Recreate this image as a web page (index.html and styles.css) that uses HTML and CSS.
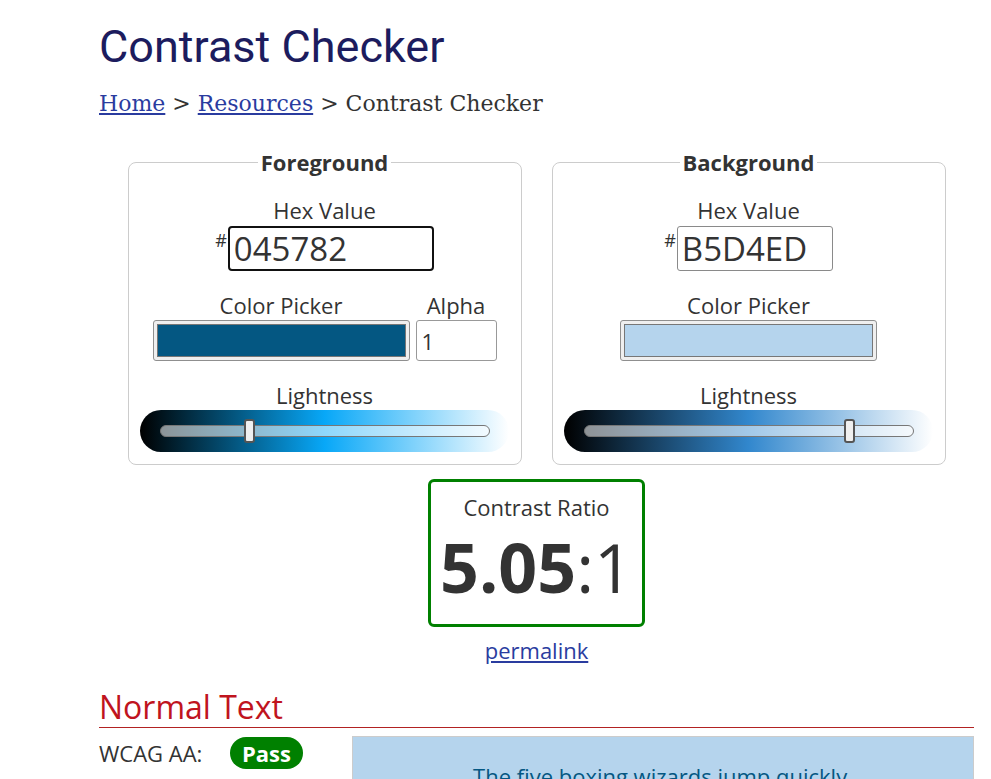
FILE: index.html
```html
<!DOCTYPE html>
<html lang="en">
<head>
<meta charset="utf-8">
<title>Contrast Checker</title>
<link rel="stylesheet" href="styles.css">
</head>
<body>
<main class="page">
  <h1 class="title">Contrast Checker</h1>
  <nav class="crumbs"><a href="#">Home</a> &gt; <a href="#">Resources</a> &gt; Contrast Checker</nav>

  <section class="tool">
    <div class="panels">
      <fieldset class="panel">
        <legend class="panel-title">Foreground</legend>
        <div class="field">
          <label class="label" for="fg-hex">Hex Value</label>
          <div class="hex-row"><span class="hash">#</span><input id="fg-hex" class="hex hex-wide" type="text" value="045782"></div>
        </div>
        <div class="picker-row">
          <div class="col">
            <label class="label" for="fg-color">Color Picker</label>
            <input id="fg-color" class="swatch" type="color" value="#045782">
          </div>
          <div class="col">
            <label class="label" for="fg-alpha">Alpha</label>
            <input id="fg-alpha" class="alpha" type="text" value="1">
          </div>
        </div>
        <div class="field field-light">
          <label class="label" for="fg-light">Lightness</label>
          <div class="light-bar light-fg">
            <input id="fg-light" class="range" type="range" min="0" max="100" step="any" value="26.3">
          </div>
        </div>
      </fieldset>

      <fieldset class="panel">
        <legend class="panel-title">Background</legend>
        <div class="field">
          <label class="label" for="bg-hex">Hex Value</label>
          <div class="hex-row"><span class="hash">#</span><input id="bg-hex" class="hex" type="text" value="B5D4ED"></div>
        </div>
        <div class="picker-row">
          <div class="col">
            <label class="label" for="bg-color">Color Picker</label>
            <input id="bg-color" class="swatch" type="color" value="#b5d4ed">
          </div>
        </div>
        <div class="field field-light">
          <label class="label" for="bg-light">Lightness</label>
          <div class="light-bar light-bg">
            <input id="bg-light" class="range" type="range" min="0" max="100" step="any" value="82">
          </div>
        </div>
      </fieldset>
    </div>

    <div class="ratio-wrap">
      <div class="ratio">
        <div class="ratio-label">Contrast Ratio</div>
        <div class="ratio-value"><b>5.05</b>:1</div>
      </div>
      <a class="permalink" href="#">permalink</a>
    </div>
  </section>

  <section class="results">
    <h2 class="results-title">Normal Text</h2>
    <div class="result-row">
      <div class="result-meta">
        <span class="result-label">WCAG AA:</span>
        <span class="badge">Pass</span>
      </div>
      <div class="sample">The five boxing wizards jump quickly.</div>
    </div>
  </section>
</main>
</body>
</html>
```

FILE: styles.css
```css
html, body {
  margin: 0;
  padding: 0;
  background: #fff;
}

body {
  font-family: "Open Sans", "Noto Sans", sans-serif;
  color: #333;
  overflow: hidden;
}

.page {
  width: 875px;
  padding-left: 99px;
}

.title {
  font-family: Roboto, "Open Sans", sans-serif;
  font-weight: 400;
  font-size: 45px;
  line-height: 52px;
  color: #1c1c5e;
  margin: 21px 0 0;
}

.crumbs {
  font-family: "DejaVu Serif", "Liberation Serif", serif;
  font-size: 22px;
  line-height: 30px;
  margin-top: 16px;
  color: #333;
}

.crumbs a {
  color: #2a3c9f;
}

.panels {
  display: flex;
  justify-content: center;
  gap: 30px;
  margin-top: 28px;
}

.panel {
  box-sizing: border-box;
  width: 394px;
  margin: 0;
  min-width: 0;
  padding: 18px 0 12px;
  border: 1px solid #ccc;
  border-radius: 8px;
}

.panel-title {
  margin: 0 auto;
  padding: 0 3px;
  font-weight: 700;
  font-size: 22px;
  line-height: 30px;
  color: #333;
}

.field {
  display: flex;
  flex-direction: column;
  align-items: center;
}

.label {
  display: block;
  font-size: 22px;
  line-height: 30px;
  text-align: center;
  color: #333;
}

.hex-row {
  display: flex;
  align-items: flex-start;
  margin-top: 1px;
}

.hash {
  font-size: 18px;
  line-height: 18px;
  margin-top: 5px;
  margin-right: 1px;
}

.hex {
  box-sizing: border-box;
  width: 156px;
  height: 45px;
  margin: 0;
  padding: 0 4px;
  font-family: "Open Sans", sans-serif;
  font-size: 33px;
  color: #333;
  border: 1px solid #8a8a8a;
  border-radius: 3px;
  background: #fff;
  outline: none;
}

.hex-wide {
  width: 206px;
  border: 2px solid #111;
  border-radius: 4px;
}

.picker-row {
  display: flex;
  justify-content: center;
  gap: 6px;
  margin-top: 19px;
}

.col {
  display: flex;
  flex-direction: column;
  align-items: center;
}

.swatch {
  box-sizing: border-box;
  width: 257px;
  height: 41px;
  margin: 0;
  padding: 3px;
  border: 1px solid #8f8f8f;
  border-radius: 3px;
  background: #efefef;
  cursor: pointer;
}

.swatch::-webkit-color-swatch-wrapper {
  padding: 0;
}

.swatch::-webkit-color-swatch {
  border: 1px solid #777;
  border-radius: 0;
}

.alpha {
  box-sizing: border-box;
  width: 81px;
  height: 41px;
  margin: 0;
  padding: 0 5px;
  font-family: "Open Sans", sans-serif;
  font-size: 22px;
  color: #333;
  border: 1px solid #999;
  border-radius: 3px;
  background: #fff;
}

.field-light {
  margin-top: 19px;
}

.light-bar {
  box-sizing: border-box;
  width: 369px;
  height: 42px;
  border-radius: 21px;
  display: flex;
  align-items: center;
  justify-content: center;
}

.light-fg {
  background: linear-gradient(to right, hsl(200, 94%, 0%), hsl(200, 94%, 50%), hsl(200, 94%, 100%));
}

.light-bg {
  background: linear-gradient(to right, hsl(207, 61%, 0%), hsl(207, 61%, 50%), hsl(207, 61%, 100%));
}

.range {
  -webkit-appearance: none;
  appearance: none;
  box-sizing: border-box;
  width: 330px;
  height: 12px;
  margin: 0;
  background: rgba(255, 255, 255, 0.55);
  border: 1px solid #777;
  border-radius: 6px;
}

.range::-webkit-slider-thumb {
  -webkit-appearance: none;
  appearance: none;
  box-sizing: border-box;
  width: 11px;
  height: 24px;
  background: #efefef;
  border: 2px solid #555;
  border-radius: 3px;
}

.ratio-wrap {
  text-align: center;
  margin-top: 14px;
}

.ratio {
  display: inline-block;
  border: 3px solid #008000;
  border-radius: 6px;
  padding: 10px 9px 12px;
}

.ratio-label {
  font-size: 22px;
  line-height: 30px;
}

.ratio-value {
  font-size: 68px;
  line-height: 90px;
}

.ratio-value b {
  font-weight: 700;
}

.permalink {
  display: block;
  margin-top: 8px;
  font-size: 22px;
  line-height: 30px;
  color: #2a3c9f;
}

.results-title {
  margin: 22px 0 0;
  font-weight: 400;
  font-size: 32px;
  line-height: 40px;
  color: #c0141e;
  border-bottom: 1px solid #b22222;
}

.result-row {
  display: flex;
  margin-top: 8px;
}

.result-meta {
  width: 253px;
  display: flex;
  align-items: center;
  height: 32px;
  margin-top: 1px;
}

.result-label {
  width: 131px;
  font-size: 22px;
  line-height: 30px;
}

.badge {
  box-sizing: border-box;
  height: 32px;
  padding: 0 12px;
  border-radius: 16px;
  background: #008000;
  color: #fff;
  font-weight: 700;
  font-size: 22px;
  line-height: 32px;
}

.sample {
  box-sizing: border-box;
  width: 622px;
  height: 140px;
  padding-top: 24px;
  background: #b5d4ed;
  border: 1px solid #ccc;
  color: #045782;
  font-size: 22px;
  line-height: 30px;
  text-align: center;
}
```
